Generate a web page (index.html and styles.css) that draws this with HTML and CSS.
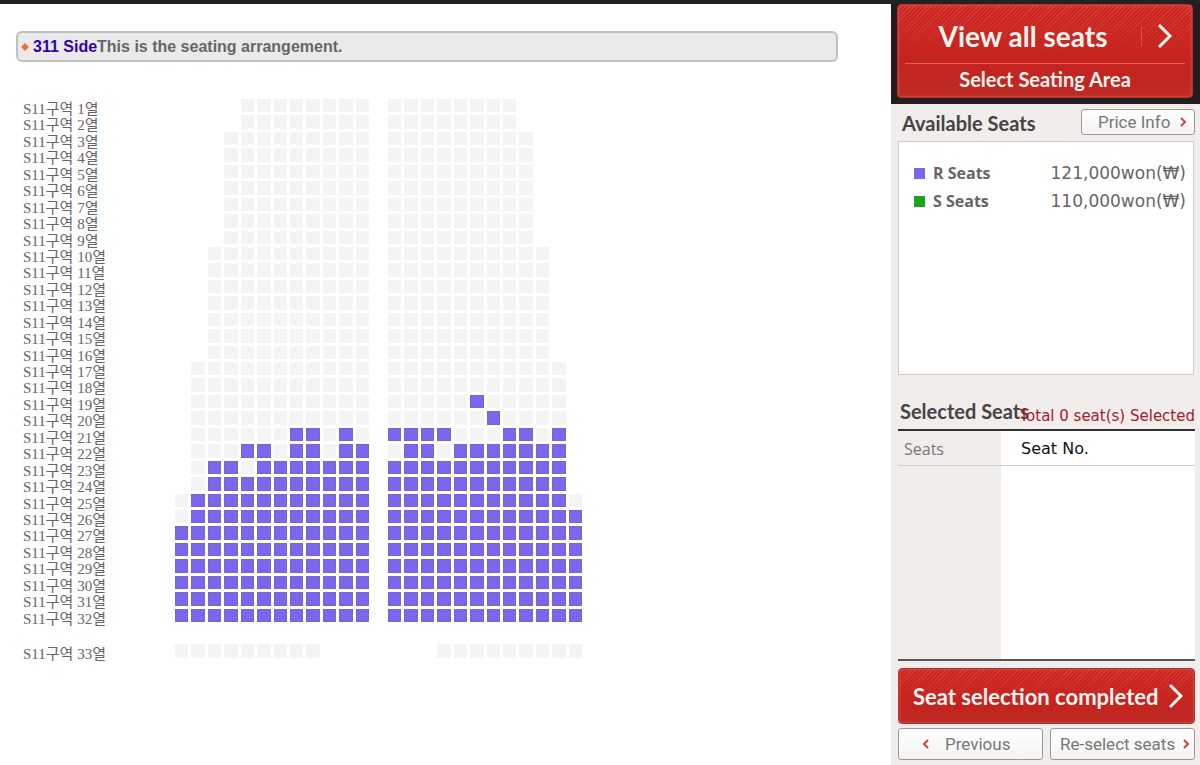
FILE: index.html
```html
<!DOCTYPE html>
<html lang="ko">
<head>
    <meta charset="UTF-8">
    <meta name="viewport" content="width=device-width, initial-scale=1.0">
    <title>Seat selection</title>
    <link rel="stylesheet" href="styles.css">
</head>

<body>
<div class="page">
    <!-- seat map -->
    <main class="map-area">
        <h1 class="map-title">
            <svg class="bullet" viewBox="0 0 8 8"><path d="M4 0 L8 4 L4 8 L0 4 Z" fill="#e07a3c"/></svg>
            <span><strong>311 Side</strong>This is the seating arrangement.</span>
        </h1>
        <div id="seat-map" class="seat-map"></div>
        <div id="seat-map-back" class="seat-map-back"></div>
    </main>

    <!-- side panel -->
    <aside class="panel">
        <div class="panel-top">
            <button type="button" class="red-button view-all">
                <span class="view-all-main">
                    <span class="view-all-text">View all seats</span>
                    <svg class="big-arrow" viewBox="0 0 16 26"><path d="M2 2 L13 13 L2 24" fill="none" stroke="#fff3ee" stroke-width="3"/></svg>
                </span>
                <span class="view-all-sub">Select Seating Area</span>
            </button>
        </div>

        <div class="panel-body">
            <div class="panel-heading">
                <h2>Available Seats</h2>
                <button type="button" class="small-button price-info">
                    Price Info
                    <svg class="small-arrow" viewBox="0 0 6 10"><path d="M1 1 L5 5 L1 9" fill="none" stroke="#cf4444" stroke-width="2"/></svg>
                </button>
            </div>

            <ul class="grade-list">
                <li><i class="grade-color grade-r"></i><b>R Seats</b><span>121,000won(₩)</span></li>
                <li><i class="grade-color grade-s"></i><b>S Seats</b><span>110,000won(₩)</span></li>
            </ul>

            <div class="selected-heading">
                <h2>Selected Seats</h2>
                <p>Total 0 seat(s) Selected</p>
            </div>

            <table class="selected-table">
                <thead>
                    <tr><th scope="col">Seats</th><th scope="col" class="seat-no">Seat No.</th></tr>
                </thead>
                <tbody>
                    <tr><td></td><td></td></tr>
                </tbody>
            </table>

            <button type="button" class="red-button complete">
                <span>Seat selection completed</span>
                <svg class="big-arrow" viewBox="0 0 16 26"><path d="M2 2 L13 13 L2 24" fill="none" stroke="#fff3ee" stroke-width="3"/></svg>
            </button>

            <div class="panel-nav">
                <button type="button" class="small-button previous">
                    <svg class="small-arrow" viewBox="0 0 6 10"><path d="M5 1 L1 5 L5 9" fill="none" stroke="#cf4444" stroke-width="2"/></svg>
                    Previous
                </button>
                <button type="button" class="small-button reselect">
                    Re-select seats
                    <svg class="small-arrow" viewBox="0 0 6 10"><path d="M1 1 L5 5 L1 9" fill="none" stroke="#cf4444" stroke-width="2"/></svg>
                </button>
            </div>
        </div>
    </aside>
</div>
<script src="seats.js"></script>
</body>

</html>
```
FILE: styles.css
```css
* {
    box-sizing: border-box;
}

body {
    margin: 0;
    background: #fff;
    font-family: "DejaVu Sans", Verdana, sans-serif;
    color: #555;
}

button {
    margin: 0;
    padding: 0;
    cursor: pointer;
}

.page {
    display: grid;
    grid-template-columns: 1fr 309px;
    min-height: 100vh;
    border-top: 4px solid #222;
}

/* seat map */
.map-area {
    padding: 27px 53px 0 16px;
}

.map-title {
    display: flex;
    align-items: center;
    gap: 4px;
    height: 31px;
    margin: 0 0 37px;
    padding: 0 3px;
    border: 2px solid #c0c0c0;
    border-radius: 6px;
    background: #eaeaea;
    font: bold 16px/20px "Liberation Sans", Arial, sans-serif;
    color: #666;
}

.map-title strong {
    color: #3300b0;
}

.bullet {
    width: 8px;
    height: 8px;
}

.seat-map {
    display: flex;
    flex-direction: column;
    gap: 3px;
    height: 523px;
    padding-left: 7px;
}

.seat-map-back {
    display: flex;
    height: 14px;
    margin-top: 22px;
    padding-left: 7px;
}

.seat-row {
    display: flex;
    flex: 1;
    min-height: 0;
}

.row-label {
    width: 152px;
    font: 15px/20px "Liberation Serif", "Noto Sans CJK KR", serif;
    color: #666;
    white-space: nowrap;
}

.seat-block {
    display: grid;
    grid-template-columns: repeat(12, 1fr);
    column-gap: 3px;
    width: 194px;
    margin-right: 19px;
}

.seat {
    display: block;
    border: 0;
}

.seat.sold {
    background: #f4f4f4;
}

.seat.open {
    border: 1px solid #7965d2;
    background: #7b66ee;
}

/* side panel */
.panel {
    background: #f1edeb;
}

.panel-top {
    padding: 0 7px 6px 6px;
    background: #241c1d;
}

.red-button {
    border: 1px solid #b13431;
    border-radius: 4px;
    background: linear-gradient(transparent, #c5231f 60%, #bd2a25), repeating-linear-gradient(135deg, #d8413c 0 1px, #cd2622 1px 3px);
    box-shadow: inset 0 0 3px #e0605c;
    color: #fff3ee;
    font-family: Lato, sans-serif;
    font-weight: bold;
}

.big-arrow {
    width: 16px;
    height: 26px;
}

.view-all {
    display: block;
    width: 100%;
    height: 94px;
    padding: 0 7px;
}

.view-all-main {
    display: flex;
    align-items: center;
    height: 56px;
    padding-right: 12px;
    border-bottom: 1px solid #e3605a;
}

.view-all-text {
    flex: 1;
    margin-right: 15px;
    border-right: 1px solid #d6504a;
    font-size: 28px;
    line-height: 20px;
}

.view-all-sub {
    display: block;
    font-size: 20px;
    line-height: 30px;
}

.panel-body {
    padding: 5px 5px 5px 7px;
}

.panel-heading {
    display: flex;
    justify-content: space-between;
    height: 32px;
    padding-left: 4px;
}

.panel h2 {
    margin: 0;
    font: bold 20px/28px Lato, sans-serif;
    color: #444;
    white-space: nowrap;
}

.small-button {
    display: flex;
    align-items: center;
    border: 1px solid #999;
    border-radius: 3px;
    background: linear-gradient(#fff, #f5f3f2);
    font: 17px/20px Roboto, sans-serif;
    color: #777;
    white-space: nowrap;
}

.small-arrow {
    width: 6px;
    height: 10px;
}

.price-info {
    justify-content: space-between;
    width: 114px;
    height: 26px;
    padding: 0 8px 0 16px;
}

.grade-list {
    height: 234px;
    margin: 0 1px 0 0;
    padding: 17px 7px 0 15px;
    border: 1px solid #ccc;
    background: #fff;
    list-style: none;
}

.grade-list li {
    display: flex;
    align-items: center;
    height: 28px;
    font-size: 17px;
    color: #666;
}

.grade-list b {
    flex: 1;
    font-family: "Open Sans", sans-serif;
    font-size: 16px;
}

.grade-color {
    width: 11px;
    height: 11px;
    margin-right: 8px;
}

.grade-r {
    background: #7b68ee;
}

.grade-s {
    background: #1fa31f;
}

.selected-heading {
    display: flex;
    justify-content: space-between;
    height: 54px;
    padding: 22px 0 0 2px;
}

.selected-heading p {
    margin: 5px 0 0 -12px;
    font-size: 15px;
    line-height: 28px;
    color: #a5202a;
    white-space: nowrap;
}

.selected-table {
    width: 100%;
    height: 232px;
    border-collapse: collapse;
    border-top: 2px solid #333;
    border-bottom: 2px solid #555;
    background: linear-gradient(90deg, #f1edeb 103px, #fff 103px);
}

.selected-table th {
    width: 103px;
    height: 35px;
    padding: 3px 0 0 6px;
    border-bottom: 1px solid #ccc;
    font: 16px/20px "Open Sans", sans-serif;
    color: #777;
    text-align: left;
}

.selected-table .seat-no {
    width: auto;
    padding-left: 20px;
    font-family: "DejaVu Sans", sans-serif;
    color: #111;
}

.complete {
    display: flex;
    align-items: center;
    justify-content: space-between;
    width: 100%;
    height: 56px;
    margin: 7px 0 4px;
    padding: 0 10px 0 14px;
    font-size: 22px;
    white-space: nowrap;
}

.panel-nav {
    display: grid;
    grid-template-columns: 1fr 1fr;
    gap: 7px;
}

.panel-nav .small-button {
    height: 32px;
}

.previous {
    gap: 16px;
    padding-left: 24px;
}

.reselect {
    justify-content: space-between;
    padding: 0 5px 0 9px;
}
```
FILE: seats.js
```js
// x = sold, o = open, . = no seat
var front = [
    ['....xxxxxxxx', 'xxxxxxxx....', 2],
    ['...xxxxxxxxx', 'xxxxxxxxx...', 7],
    ['..xxxxxxxxxx', 'xxxxxxxxxx..', 7],
    ['.xxxxxxxxxxx', 'xxxxxxxxxxx.', 2],
    ['.xxxxxxxxxxx', 'xxxxxoxxxxx.', 1],
    ['.xxxxxxxxxxx', 'xxxxxxoxxxx.', 1],
    ['.xxxxxxooxox', 'ooooxxxooxo.', 1],
    ['.xxxooxooxoo', 'xooxooooooo.', 1],
    ['.xooxooooooo', 'ooooooooooo.', 1],
    ['.xoooooooooo', 'ooooooooooo.', 1],
    ['xooooooooooo', 'ooooooooooox', 1],
    ['xooooooooooo', 'oooooooooooo', 1],
    ['oooooooooooo', 'oooooooooooo', 6]
];
var back = ['xxxxxxxxx...', '...xxxxxxxxx'];

function makeBlock(seats) {
    var html = '<div class="seat-block">';
    for (var i = 0; i < seats.length; i++) {
        if (seats[i] === 'o') {
            html += '<button type="button" class="seat open" aria-label="Seat ' + (i + 1) + '"></button>';
        } else {
            html += '<span class="seat' + (seats[i] === 'x' ? ' sold' : '') + '"></span>';
        }
    }
    return html + '</div>';
}

function makeRow(number, left, right) {
    return '<div class="seat-row"><span class="row-label">S11구역 ' + number + '열</span>' +
        makeBlock(left) + makeBlock(right) + '</div>';
}

var rows = '';
var number = 1;
front.forEach(function (group) {
    for (var n = 0; n < group[2]; n++) {
        rows += makeRow(number++, group[0], group[1]);
    }
});
document.getElementById('seat-map').innerHTML = rows;
document.getElementById('seat-map-back').innerHTML = makeRow(number, back[0], back[1]);
```
